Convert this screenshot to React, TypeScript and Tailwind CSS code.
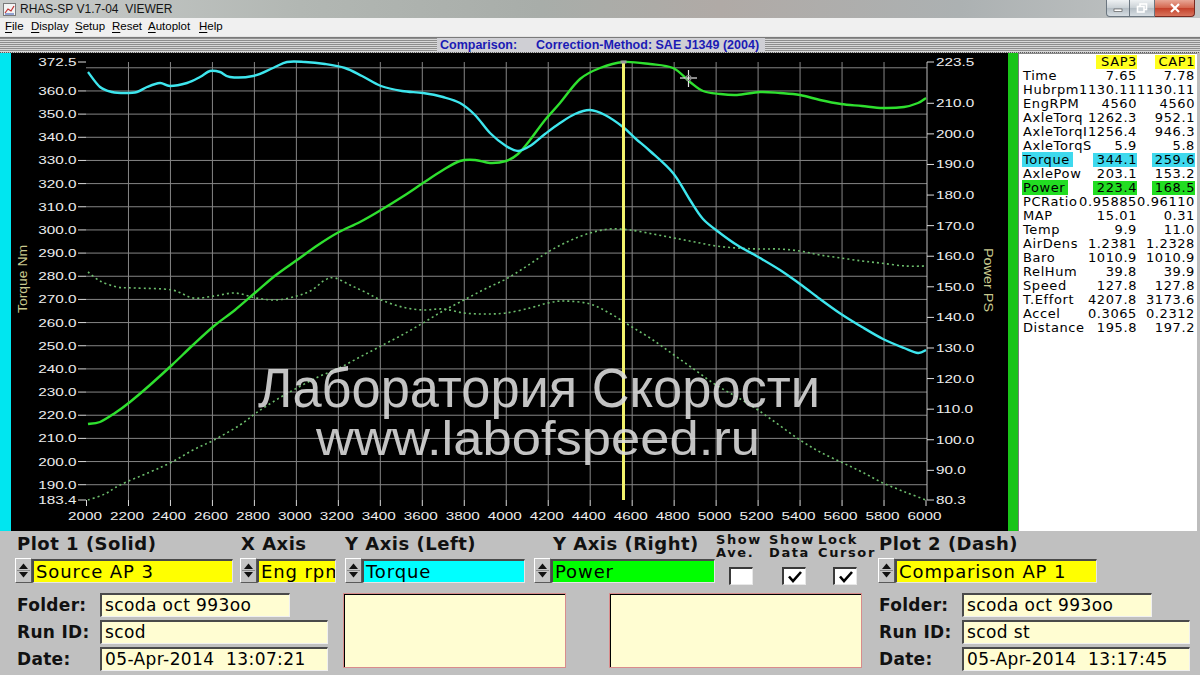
import React from "react";

type P = [number, number];

const LY = (v: number) => 62 + (372.5 - v) * (438 / 189.1);
const RY = (v: number) => 62 + (223.5 - v) * (438 / 143.2);
const XR = (r: number) => 86.5 + (r - 2000) * (839.5 / 4000);

function smooth(pts: P[]): string {
  const f = (n: number) => n.toFixed(1);
  let d = `M${f(pts[0][0])} ${f(pts[0][1])}`;
  for (let i = 0; i < pts.length - 1; i++) {
    const p0 = pts[Math.max(i - 1, 0)];
    const p1 = pts[i];
    const p2 = pts[i + 1];
    const p3 = pts[Math.min(i + 2, pts.length - 1)];
    const t = 6;
    d += ` C${f(p1[0] + (p2[0] - p0[0]) / t)} ${f(p1[1] + (p2[1] - p0[1]) / t)} ${f(p2[0] - (p3[0] - p1[0]) / t)} ${f(p2[1] - (p3[1] - p1[1]) / t)} ${f(p2[0])} ${f(p2[1])}`;
  }
  return d;
}

const cyan: P[] = [
  [88, 72], [100, 87], [112, 92], [125, 93], [137, 92], [147, 87], [160, 83], [170, 86], [187, 83], [200, 77],
  [210, 71], [220, 72], [230, 77], [253, 76], [273, 68], [287, 62], [305, 62], [325, 64], [345, 68], [362, 76],
  [381, 86], [402, 91], [423, 93], [443, 97], [460, 103], [475, 115], [490, 133], [506, 146], [518, 151],
  [530, 146], [545, 134], [560, 123], [575, 114], [590, 110], [605, 115], [623, 127], [636, 139], [650, 151],
  [673, 173], [690, 200], [703, 219], [720, 233], [737, 245], [760, 258], [780, 270], [800, 284], [820, 299],
  [841, 314], [862, 327], [883, 339], [904, 348], [918, 353], [926, 350],
];

const green: P[] = [
  [88, 424], [100, 422], [115, 413], [130, 402], [150, 385], [172, 365], [193, 345], [214, 326], [235, 310],
  [256, 292], [276, 275], [297, 260], [318, 245], [339, 232], [360, 222], [381, 210], [402, 197], [423, 183],
  [443, 170], [460, 161], [475, 160], [490, 163], [506, 161], [518, 154], [530, 140], [545, 120], [560, 103],
  [580, 79], [600, 68], [623, 62], [650, 64], [673, 68], [690, 82], [703, 91], [720, 94], [737, 95], [760, 92],
  [780, 93], [800, 95], [820, 100], [841, 104], [862, 106], [883, 108], [904, 107], [918, 103], [926, 98],
];

const torque2: P[] = [
  [88, 272], [100, 281], [117, 287], [135, 288], [172, 290], [193, 298], [214, 296], [235, 293], [256, 298],
  [276, 300], [297, 296], [312, 290], [325, 280], [335, 278], [350, 285], [365, 292], [381, 300], [402, 307],
  [423, 310], [443, 309], [464, 313], [485, 314], [506, 313], [530, 308], [548, 303], [565, 301], [590, 304],
  [611, 314], [632, 327], [653, 340], [674, 355], [695, 370], [716, 385], [737, 397], [758, 410], [779, 425],
  [800, 440], [820, 452], [841, 462], [862, 472], [883, 483], [905, 492], [926, 500],
];

const power2: P[] = [
  [88, 500], [105, 494], [120, 485], [150, 472], [172, 462], [193, 450], [214, 440], [240, 425], [256, 413],
  [276, 400], [297, 388], [318, 377], [339, 368], [360, 357], [381, 346], [402, 335], [423, 323], [443, 311],
  [464, 300], [485, 289], [506, 279], [527, 266], [548, 252], [569, 241], [590, 233], [610, 229], [630, 230],
  [653, 234], [674, 238], [695, 242], [716, 246], [737, 248], [758, 249], [779, 249], [800, 251], [820, 255],
  [841, 258], [862, 261], [880, 263], [905, 266], [926, 266],
];

function CT({
  x,
  y,
  anchor = "start",
  children,
  fill = "#ededed",
  size = 11.5,
}: {
  x: number;
  y: number;
  anchor?: "start" | "end" | "middle";
  children: React.ReactNode;
  fill?: string;
  size?: number;
}) {
  return (
    <text
      transform={`translate(${x} ${y}) scale(1.33 1)`}
      textAnchor={anchor}
      fontSize={size}
      fill={fill}
      fontFamily="'Liberation Sans', Arial, sans-serif"
    >
      {children}
    </text>
  );
}

function Chart() {
  const leftVals: number[] = [];
  for (let v = 360; v >= 190; v -= 10) leftVals.push(v);
  const gridVals: number[] = [];
  for (let v = 370; v >= 190; v -= 10) gridVals.push(v);
  const rightVals: number[] = [];
  for (let v = 210; v >= 90; v -= 10) rightVals.push(v);
  const rpms: number[] = [];
  for (let r = 2000; r <= 6000; r += 200) rpms.push(r);

  return (
    <svg width={997} height={478} viewBox="11 53 997 478" className="block">
      {gridVals.map((v) => (
        <line key={"h" + v} x1={86} x2={927} y1={LY(v)} y2={LY(v)} stroke="#858585" strokeWidth={1} />
      ))}
      {rpms
        .filter((r) => r > 2000 && r < 6000)
        .map((r) => (
          <line key={"v" + r} x1={XR(r)} x2={XR(r)} y1={62} y2={500} stroke="#858585" strokeWidth={1} />
        ))}
      <line x1={927} x2={927} y1={62} y2={500} stroke="#bdbdbd" strokeWidth={1} />
      {[372.5, ...leftVals, 183.4].map((v) => (
        <line key={"lt" + v} x1={78} x2={86} y1={LY(v)} y2={LY(v)} stroke="#dcdcdc" strokeWidth={1} />
      ))}
      {[223.5, ...rightVals, 80.3].map((v) => (
        <line key={"rt" + v} x1={927} x2={934} y1={RY(v)} y2={RY(v)} stroke="#dcdcdc" strokeWidth={1} />
      ))}
      {rpms.map((r) => (
        <line key={"bt" + r} x1={XR(r)} x2={XR(r)} y1={500} y2={506} stroke="#dcdcdc" strokeWidth={1} />
      ))}
      {[372.5, ...leftVals, 183.4].map((v) => (
        <CT key={"ll" + v} x={76.5} y={LY(v) + 4} anchor="end">
          {v.toFixed(1)}
        </CT>
      ))}
      {[223.5, ...rightVals, 80.3].map((v) => (
        <CT key={"rl" + v} x={936} y={RY(v) + 4}>
          {v.toFixed(1)}
        </CT>
      ))}
      {rpms.map((r) => (
        <CT key={"xl" + r} x={XR(r) - 1.5} y={520} anchor="middle">
          {String(r)}
        </CT>
      ))}
      <text
        transform="translate(27 313) rotate(-90)"
        fontSize={12}
        fill="#c9c98e"
        textLength={68}
        lengthAdjust="spacingAndGlyphs"
        fontFamily="'Liberation Sans', Arial, sans-serif"
      >
        Torque Nm
      </text>
      <text
        transform="translate(984 248) rotate(90)"
        fontSize={12}
        fill="#c9c98e"
        textLength={64}
        lengthAdjust="spacingAndGlyphs"
        fontFamily="'Liberation Sans', Arial, sans-serif"
      >
        Power PS
      </text>
      <path d={smooth(torque2)} fill="none" stroke="#6cbc6c" strokeWidth={1.6} strokeDasharray="2 3" />
      <path d={smooth(power2)} fill="none" stroke="#6cbc6c" strokeWidth={1.6} strokeDasharray="2 3" />
      <path d={smooth(green)} fill="none" stroke="#2fe02f" strokeWidth={2.4} strokeLinejoin="round" />
      <path d={smooth(cyan)} fill="none" stroke="#3ee6ee" strokeWidth={2.4} strokeLinejoin="round" />
      <rect x={622} y={62} width={3} height={438} fill="#f2f26c" />
      <rect x={620.5} y={60.5} width={6} height={3} fill="#9a9a9a" />
      <g stroke="#e8e8e8" strokeWidth={1.2} fill="none">
        <line x1={680} x2={697} y1={78} y2={78} />
        <line x1={688.5} x2={688.5} y1={70} y2={87} />
        <circle cx={688.5} cy={78} r={2.5} stroke="#888" />
      </g>
      <text
        x={258}
        y={407}
        fontSize={56}
        textLength={562}
        lengthAdjust="spacingAndGlyphs"
        fill="#dedede"
        fillOpacity={0.88}
        fontFamily="'Liberation Sans', Arial, sans-serif"
      >
        Лаборатория Скорости
      </text>
      <text
        x={316}
        y={455}
        fontSize={49}
        textLength={444}
        lengthAdjust="spacingAndGlyphs"
        fill="#dedede"
        fillOpacity={0.88}
        fontFamily="'Liberation Sans', Arial, sans-serif"
      >
        www.labofspeed.ru
      </text>
    </svg>
  );
}

const rows: [string, string, string, string?][] = [
  ["Time", "7.65", "7.78"],
  ["Hubrpm", "1130.11", "1130.11"],
  ["EngRPM", "4560", "4560"],
  ["AxleTorq", "1262.3", "952.1"],
  ["AxleTorqI", "1256.4", "946.3"],
  ["AxleTorqS", "5.9", "5.8"],
  ["Torque", "344.1", "259.6", "c"],
  ["AxlePow", "203.1", "153.2"],
  ["Power", "223.4", "168.5", "g"],
  ["PCRatio", "0.95885", "0.96110"],
  ["MAP", "15.01", "0.31"],
  ["Temp", "9.9", "11.0"],
  ["AirDens", "1.2381", "1.2328"],
  ["Baro", "1010.9", "1010.9"],
  ["RelHum", "39.8", "39.9"],
  ["Speed", "127.8", "127.8"],
  ["T.Effort", "4207.8", "3173.6"],
  ["Accel", "0.3065", "0.2312"],
  ["Distance", "195.8", "197.2"],
];

function DataPanel() {
  return (
    <div className="w-[178px] h-[478px] bg-white border-t border-[#8a8a8a] pt-[1px] font-['DejaVu_Sans',sans-serif] text-[13px] leading-[14px] tracking-[0.6px] text-black">
      <div className="flex h-[14px]">
        <div className="w-[77px]" />
        <div className="w-[41px] bg-[#ffff1e] flex justify-end">SAP3</div>
        <div className="w-[18px]" />
        <div className="w-[40px] bg-[#ffff1e] flex justify-end">CAP1</div>
      </div>
      {rows.map(([label, a, b, hl]) => {
        const lab = hl === "c" ? "bg-[#3fd9ee]" : hl === "g" ? "bg-[#22dd22]" : "";
        return (
          <div key={label} className="flex h-[14px] whitespace-nowrap">
            <div className="w-[70px] pl-[3px]">
              <span className={`${lab} pl-[1px] pr-[3px]`}>{label}</span>
            </div>
            <div className="w-[48px] flex justify-end">
              <span className={`${lab} min-w-[44px] flex justify-end`}>{a}</span>
            </div>
            <div className="w-[58px] flex justify-end">
              <span className={`${lab} min-w-[43px] flex justify-end`}>{b}</span>
            </div>
          </div>
        );
      })}
    </div>
  );
}

function Spin() {
  return (
    <div className="w-[17px] h-[25px] shrink-0 bg-[#c4c4c4] border-t border-l border-t-white border-l-white border-r border-b border-r-[#5a5a5a] border-b-[#5a5a5a]">
      <svg width="15" height="23" viewBox="0 0 15 23" className="block">
        <path d="M3 10 L12 10 L7.5 4.5 Z" fill="#111" />
        <line x1="1" x2="14" y1="11.5" y2="11.5" stroke="#8a8a8a" />
        <path d="M3 13 L12 13 L7.5 18.5 Z" fill="#111" />
      </svg>
    </div>
  );
}

function Check({ on }: { on: boolean }) {
  return (
    <div className="w-[24px] h-[18px] bg-white border-t-2 border-l-2 border-t-[#3a3a3a] border-l-[#3a3a3a] border-r border-b border-r-[#e8e8e8] border-b-[#e8e8e8]">
      {on && (
        <svg width="22" height="16" viewBox="0 0 22 16" className="block">
          <path d="M5 7.5 L9 12 L17 3" fill="none" stroke="#000" strokeWidth="2.6" />
        </svg>
      )}
    </div>
  );
}

const HEAD =
  "h-[27px] font-bold text-[18px] tracking-[0.5px] leading-[26px] text-[#111] whitespace-nowrap";
const FIELD =
  "h-[24px] flex-1 flex items-center pl-[2px] overflow-hidden whitespace-nowrap text-[18px] tracking-[0.9px] text-black border-t-2 border-l-2 border-t-[#4a4a4a] border-l-[#4a4a4a] border-r border-b border-r-[#e6e6e6] border-b-[#e6e6e6]";
const INFO =
  "h-[24px] flex items-center pl-[3px] whitespace-pre overflow-hidden text-[17px] tracking-[0.4px] text-black bg-[#fffdd2] border-t-2 border-l-2 border-t-[#4a4a4a] border-l-[#4a4a4a] border-r border-b border-r-[#f0f0f0] border-b-[#f0f0f0]";
const LAB = "w-[83px] font-bold text-[17px] tracking-[0.3px] leading-[24px] text-[#111]";
const SMALL =
  "w-full mt-[2px] text-[13px] font-bold leading-[13px] tracking-[1.6px] text-[#111] whitespace-nowrap";

function Info({ run, date }: { run: string; date: string }) {
  return (
    <div className="flex flex-col gap-[3px]">
      <div className="flex">
        <div className={LAB}>Folder:</div>
        <div className={`${INFO} w-[190px]`}>scoda oct 993oo</div>
      </div>
      <div className="flex">
        <div className={LAB}>Run ID:</div>
        <div className={`${INFO} w-[228px]`}>{run}</div>
      </div>
      <div className="flex">
        <div className={LAB}>Date:</div>
        <div className={`${INFO} w-[228px]`}>{date}</div>
      </div>
    </div>
  );
}

function Bottom() {
  return (
    <div className="h-[144px] bg-[#c0c0c0] flex flex-col font-['DejaVu_Sans',sans-serif]">
      <div className="h-[62px] flex">
        <div className="ml-[15px] w-[218px] flex flex-col">
          <div className={`${HEAD} pl-[2px]`}>Plot 1 (Solid)</div>
          <div className="flex items-start">
            <Spin />
            <div className={`${FIELD} bg-[#ffff00] mt-[1px]`}>Source AP 3</div>
          </div>
        </div>
        <div className="ml-[7px] w-[96px] flex flex-col">
          <div className={`${HEAD} pl-[1px]`}>X Axis</div>
          <div className="flex items-start">
            <Spin />
            <div className={`${FIELD} bg-[#ffff00] mt-[1px]`}>Eng rpm</div>
          </div>
        </div>
        <div className="ml-[9px] w-[180px] flex flex-col">
          <div className={HEAD}>Y Axis (Left)</div>
          <div className="flex items-start">
            <Spin />
            <div className={`${FIELD} bg-[#00ffff] mt-[1px]`}>Torque</div>
          </div>
        </div>
        <div className="ml-[9px] w-[181px] flex flex-col">
          <div className={`${HEAD} pl-[19px]`}>Y Axis (Right)</div>
          <div className="flex items-start">
            <Spin />
            <div className={`${FIELD} bg-[#00ff00] mt-[1px]`}>Power</div>
          </div>
        </div>
        <div className="ml-[1px] w-[50px] flex flex-col items-center">
          <div className={SMALL}>
            Show
            <br />
            Ave.
          </div>
          <div className="mt-[8px]">
            <Check on={false} />
          </div>
        </div>
        <div className="ml-[3px] w-[49px] flex flex-col items-center">
          <div className={SMALL}>
            Show
            <br />
            Data
          </div>
          <div className="mt-[8px]">
            <Check on={true} />
          </div>
        </div>
        <div className="w-[48px] flex flex-col items-center">
          <div className={SMALL}>
            Lock
            <br />
            Cursor
          </div>
          <div className="mt-[8px] ml-[6px]">
            <Check on={true} />
          </div>
        </div>
        <div className="ml-[12px] w-[219px] flex flex-col">
          <div className={`${HEAD} pl-[1px]`}>Plot 2 (Dash)</div>
          <div className="flex items-start">
            <Spin />
            <div className={`${FIELD} bg-[#ffff00] mt-[1px]`}>Comparison AP 1</div>
          </div>
        </div>
      </div>
      <div className="flex">
        <div className="ml-[17px]">
          <Info run="scod" date="05-Apr-2014  13:07:21" />
        </div>
        <div className="ml-[15px] w-[223px] h-[75px] border border-[#d98c8c]">
          <div className="h-full border-t border-l border-t-black border-l-black bg-[#fffdd2]" />
        </div>
        <div className="ml-[43px] w-[253px] h-[75px] border border-[#d98c8c]">
          <div className="h-full border-t border-l border-t-black border-l-black bg-[#fffdd2]" />
        </div>
        <div className="ml-[17px]">
          <Info run="scod st" date="05-Apr-2014  13:17:45" />
        </div>
      </div>
    </div>
  );
}

function TitleBar() {
  return (
    <div className="h-[18px] flex items-center bg-[linear-gradient(90deg,#c9cccb,#b2b7b3_25%,#a8ada9_45%,#b0aaa6_60%,#acb1b2_80%,#c2c5c5)] font-['Liberation_Sans',Arial,sans-serif]">
      <svg width="13" height="13" viewBox="0 0 13 13" className="ml-[3px] shrink-0">
        <rect x="0.5" y="0.5" width="12" height="12" fill="#f4f4f4" stroke="#7a7a7a" />
        <path d="M2 10 L5 6 L8 8 L11 3" fill="none" stroke="#c03030" strokeWidth="1.2" />
        <path d="M2 11 L11 11" stroke="#3050b0" />
      </svg>
      <span className="ml-[4px] text-[12px] text-[#151515] whitespace-pre">RHAS-SP V1.7-04  VIEWER</span>
      <div className="ml-auto mr-[5px] self-start flex h-[17px]">
        <div className="w-[24px] h-[17px] rounded-bl-[4px] border border-t-0 border-[#6b7680] bg-[linear-gradient(180deg,#eef1f3,#c9d0d5_50%,#b4bdc4_51%,#d6dde2)] flex items-center justify-center">
          <svg width="10" height="8" viewBox="0 0 10 8">
            <rect x="1" y="5" width="8" height="2.5" fill="#fff" stroke="#444" strokeWidth="0.6" />
          </svg>
        </div>
        <div className="w-[25px] h-[17px] border-b border-r border-[#6b7680] bg-[linear-gradient(180deg,#eef1f3,#c9d0d5_50%,#b4bdc4_51%,#d6dde2)] flex items-center justify-center">
          <svg width="12" height="10" viewBox="0 0 12 10">
            <rect x="4" y="1" width="6.5" height="5.5" fill="none" stroke="#fff" strokeWidth="1.6" />
            <rect x="1.5" y="3.5" width="6.5" height="5.5" fill="#cfd6db" stroke="#fff" strokeWidth="1.6" />
          </svg>
        </div>
        <div className="w-[40px] h-[17px] rounded-br-[4px] border-b border-r border-[#7a2a20] bg-[linear-gradient(180deg,#e8a796,#d4654d_50%,#c4402a_51%,#d8735c)] flex items-center justify-center">
          <svg width="12" height="10" viewBox="0 0 12 10">
            <path d="M2 1 L10 9 M10 1 L2 9" stroke="#fff" strokeWidth="2.2" />
          </svg>
        </div>
      </div>
    </div>
  );
}

function MenuBar() {
  const items: [string, string][] = [
    ["File", "w-[26px]"],
    ["Display", "w-[44px]"],
    ["Setup", "w-[37px]"],
    ["Reset", "w-[36px]"],
    ["Autoplot", "w-[51px]"],
    ["Help", "w-[30px]"],
  ];
  return (
    <div className="h-[18px] bg-[#f0f0f0] flex items-center pl-[5px] text-[11.5px] text-black font-['Liberation_Sans',Arial,sans-serif]">
      {items.map(([it, w]) => (
        <span key={it} className={`${w} whitespace-nowrap`}>
          <span className="underline underline-offset-2">{it[0]}</span>
          {it.slice(1)}
        </span>
      ))}
    </div>
  );
}

function Band() {
  return (
    <div className="h-[14px] flex bg-[repeating-linear-gradient(180deg,#8e8e8e_0px,#8e8e8e_1px,#d8d8d8_1px,#d8d8d8_2px)]">
      <div className="ml-[437px] w-[328px] bg-[#cfcfd4] flex items-center text-[12.5px] font-bold text-[#1b1bb4] leading-none whitespace-nowrap font-['Liberation_Sans',Arial,sans-serif]">
        <span className="ml-[3px]">Comparison:</span>
        <span className="ml-[19px]">Correction-Method: SAE J1349 (2004)</span>
      </div>
    </div>
  );
}

export default function App() {
  return (
    <div className="w-[1200px] h-[675px] overflow-hidden flex flex-col bg-[#c0c0c0]">
      <TitleBar />
      <MenuBar />
      <div className="h-[2px] bg-[#7a7a7a] border-t border-[#e4e4e4]" />
      <Band />
      <div className="h-[1px] bg-[repeating-linear-gradient(90deg,#5a5a5a_0px,#5a5a5a_1px,#c8c8c8_1px,#c8c8c8_2px)]" />
      <div className="h-[478px] flex">
        <div className="w-[11px] bg-[#00e6f0]" />
        <div className="w-[997px] bg-black">
          <Chart />
        </div>
        <div className="w-[10px] bg-[#18c418]" />
        <div className="w-[1px] bg-[#7a7a7a]" />
        <DataPanel />
        <div className="w-[3px] bg-[#bdbdbd]" />
      </div>
      <Bottom />
    </div>
  );
}
